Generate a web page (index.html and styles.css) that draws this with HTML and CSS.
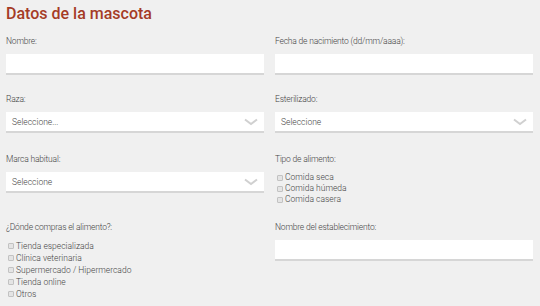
FILE: index.html
```html
<!DOCTYPE html>
<html lang="es">
<head>
    <meta charset="UTF-8">
    <meta name="viewport" content="width=device-width, initial-scale=1.0">
    <title>Datos de la mascota</title>
    <link rel="stylesheet" href="styles.css">
</head>
<body>
    <div class="container">
        <h2 class="section-title">Datos de la mascota</h2>

        <form class="pet-form">
            <!-- Row 1 -->
            <div class="field">
                <label class="field-label">Nombre:</label>
                <input type="text" class="text-input">
            </div>
            <div class="field">
                <label class="field-label">Fecha de nacimiento (dd/mm/aaaa):</label>
                <input type="text" class="text-input">
            </div>

            <!-- Row 2 -->
            <div class="field">
                <label class="field-label">Raza:</label>
                <div class="select-box">
                    <span>Seleccione...</span>
                    <svg class="chevron" width="14" height="8" viewBox="0 0 14 8"><path d="M1 1.5 L7 6 L13 1.5" fill="none" stroke="#d0d0d0" stroke-width="2"/></svg>
                </div>
            </div>
            <div class="field">
                <label class="field-label">Esterilizado:</label>
                <div class="select-box">
                    <span>Seleccione</span>
                    <svg class="chevron" width="14" height="8" viewBox="0 0 14 8"><path d="M1 1.5 L7 6 L13 1.5" fill="none" stroke="#d0d0d0" stroke-width="2"/></svg>
                </div>
            </div>

            <!-- Row 3 -->
            <div class="field">
                <label class="field-label">Marca habitual:</label>
                <div class="select-box">
                    <span>Seleccione</span>
                    <svg class="chevron" width="14" height="8" viewBox="0 0 14 8"><path d="M1 1.5 L7 6 L13 1.5" fill="none" stroke="#d0d0d0" stroke-width="2"/></svg>
                </div>
            </div>
            <div class="field">
                <label class="field-label">Tipo de alimento:</label>
                <div class="check-list check-list--tight">
                    <label class="check"><span class="box"></span>Comida seca</label>
                    <label class="check"><span class="box"></span>Comida húmeda</label>
                    <label class="check"><span class="box"></span>Comida casera</label>
                </div>
            </div>

            <!-- Row 4 -->
            <div class="field">
                <label class="field-label">¿Dónde compras el alimento?:</label>
                <div class="check-list">
                    <label class="check"><span class="box"></span>Tienda especializada</label>
                    <label class="check"><span class="box"></span>Clínica veterinaria</label>
                    <label class="check"><span class="box"></span>Supermercado / Hipermercado</label>
                    <label class="check"><span class="box"></span>Tienda online</label>
                    <label class="check"><span class="box"></span>Otros</label>
                </div>
            </div>
            <div class="field">
                <label class="field-label">Nombre del establecimiento:</label>
                <input type="text" class="text-input">
            </div>
        </form>
    </div>
</body>
</html>
```

FILE: styles.css
```css
:root {
    --bg: #f0f0f0;
    --title: #a53b26;
    --label: #444;
    --field: #fff;
    --shadow: #d6d6d6;
}

* {
    margin: 0;
    padding: 0;
    box-sizing: border-box;
}

body {
    background-color: var(--bg);
    font-family: Roboto, 'Liberation Sans', sans-serif;
    color: var(--label);
}

.container {
    padding: 3px 6px 0;
}

.section-title {
    font-size: 16px;
    font-weight: 500;
    color: var(--title);
    line-height: 22px;
}

/* Form grid */
.pet-form {
    display: grid;
    grid-template-columns: 258px 258px;
    column-gap: 11px;
    grid-template-rows: 58px 60px 68px auto;
    margin-top: 11px;
}

.field {
    display: flex;
    flex-direction: column;
}

.field-label {
    font-size: 8.5px;
    line-height: 10px;
    font-weight: 300;
    letter-spacing: -0.2px;
    color: var(--label);
    margin-bottom: 8px;
}

.text-input {
    height: 21px;
    border: none;
    background-color: var(--field);
    border-bottom: 2px solid var(--shadow);
    outline: none;
}

.select-box {
    height: 21px;
    background-color: var(--field);
    border-bottom: 2px solid var(--shadow);
    display: flex;
    align-items: center;
    justify-content: space-between;
    padding: 0 6px;
    font-size: 8.5px;
    font-weight: 300;
    color: #444;
}

.chevron {
    margin-top: 1px;
}

/* Checkboxes */
.check-list {
    display: flex;
    flex-direction: column;
    padding-left: 2px;
}

.check {
    display: flex;
    align-items: center;
    font-size: 8.5px;
    font-weight: 300;
    line-height: 12px;
    color: #444;
}

.check-list--tight .check {
    line-height: 11px;
}

.box {
    width: 6px;
    height: 6px;
    border: 1px solid #c2c2c2;
    border-radius: 1px;
    background-color: #e4e4e4;
    margin-right: 2px;
}
```
